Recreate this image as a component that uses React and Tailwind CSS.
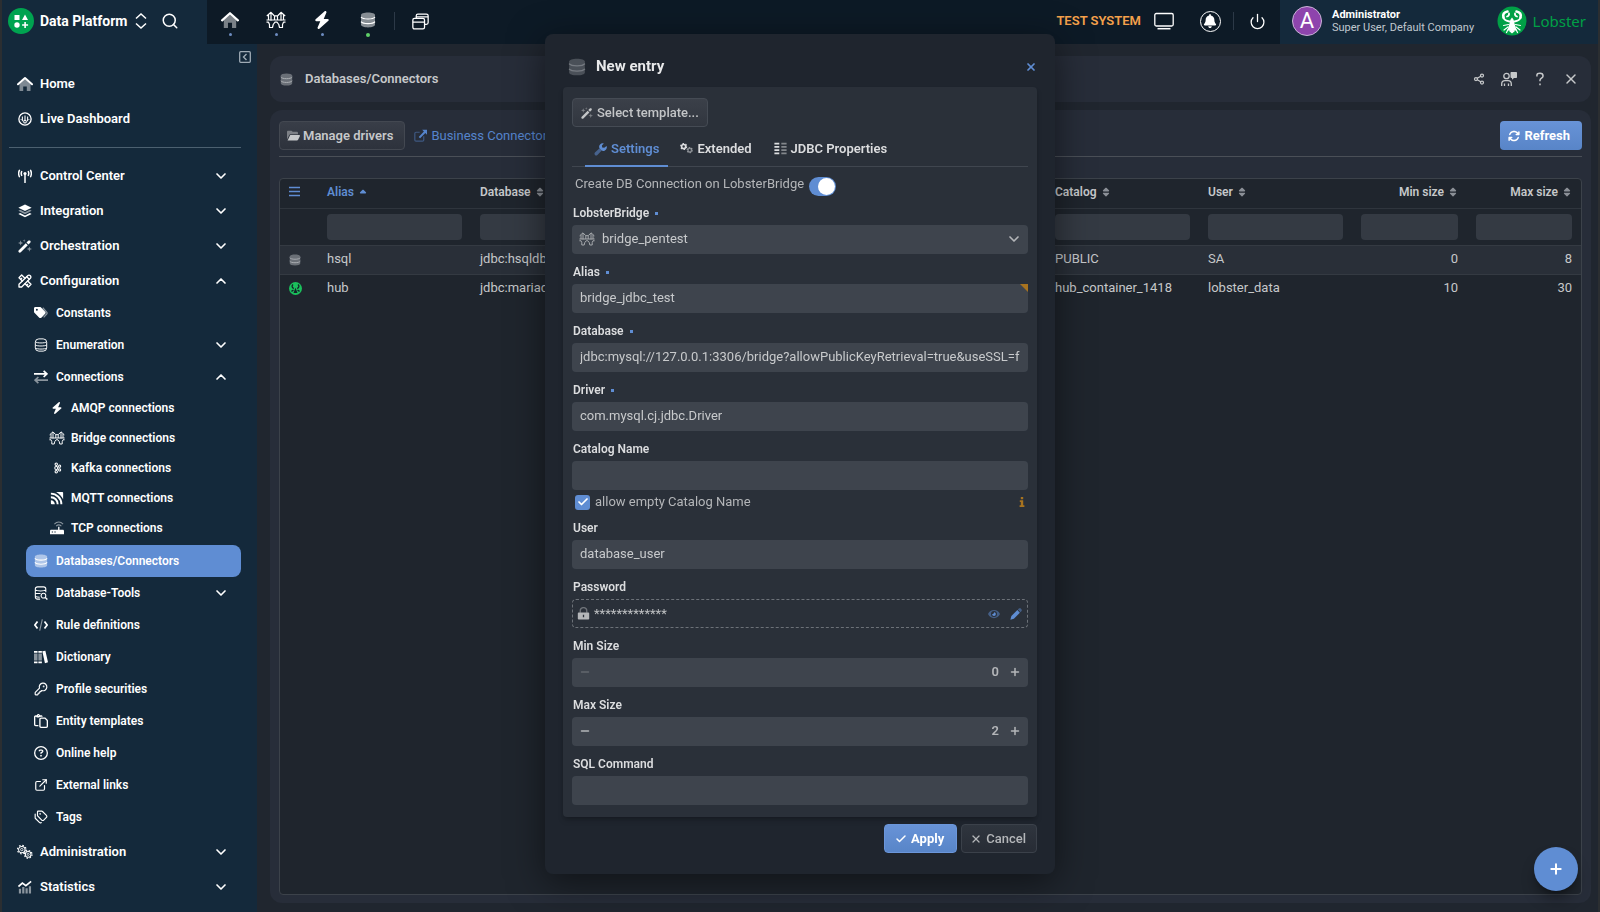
import { useState } from 'react'
import { Check, ChevronDown, ChevronUp, ExternalLink, KeyRound, Minus, Plus, Power, Search, Share2, Tags, X } from 'lucide-react'
import { FaArrowsRotate, FaBell, FaBolt, FaRegCircleQuestion, FaRegPaste, FaSort, FaSortUp } from 'react-icons/fa6'
import { TbTools } from 'react-icons/tb'

function Svg({ box = 16, className = 'size-4', children }) {
  return (
    <svg viewBox={`0 0 ${box} ${box}`} className={`shrink-0 ${className}`} fill="none" stroke="none" aria-hidden="true">
      {children}
    </svg>
  )
}

function DatabaseIcon({ className }) {
  return (
    <Svg className={className}>
      <path fill="currentColor" fillOpacity=".5" d="M1 3.2C1 1.7 4 .6 8 .6s7 1.100 7 2.600v9.600c0 1.500-3 2.600-7 2.600s-7-1.100-7-2.600z" />
      <path stroke="currentColor" strokeWidth="1.200" d="M1 5c1 1.300 3.500 2 7 2s6-.7 7-2M1 9.600c1 1.300 3.500 2 7 2s6-.7 7-2" />
    </Svg>
  )
}

function DatabaseOutlineIcon({ className }) {
  return (
    <Svg className={className}>
      <g stroke="currentColor" strokeWidth="1.100">
        <rect x="1.500" y="1" width="13" height="14" rx="4" />
        <path d="M1.500 4.500c2 1.500 11 1.500 13 0M1.500 8c2 1.500 11 1.500 13 0M1.500 11.500c2 1.500 11 1.500 13 0" />
      </g>
    </Svg>
  )
}

function DatabaseSearchIcon({ className }) {
  return (
    <Svg className={className}>
      <g stroke="currentColor" strokeWidth="1.200">
        <path d="M7 15H4c-1.500 0-2.500-1-2.500-2.500v-9C1.500 2 2.500 1 4 1h7c1.500 0 2.500 1 2.500 2.500V7M1.500 4.500c2 1.500 10 1.500 12 0M1.500 8.500h6M1.500 12c1.500.6 3 .8 5 .8" />
        <circle cx="10.800" cy="11" r="2.700" />
        <path d="m12.800 13 2.500 2.500" strokeWidth="1.600" />
      </g>
    </Svg>
  )
}

function HomeIcon({ className }) {
  return (
    <Svg className={className}>
      <path fill="currentColor" fillOpacity=".45" d="M2.500 8 8 3l5.500 5v7H9.800v-4.500H6.200V15H2.500z" />
      <path stroke="currentColor" strokeWidth="2" strokeLinecap="round" strokeLinejoin="round" d="M1 8.300 8 2l7 6.300" />
    </Svg>
  )
}

function BridgeIcon({ className }) {
  return (
    <Svg box={20} className={className}>
      <g stroke="currentColor" strokeWidth="1.200" strokeLinejoin="round">
        <path d="M.8 6 5 2.300 8 5.500c1.300.6 2.700.6 4 0l3-3.200L19.200 6M5 2.500v8M15 2.500v8M8.500 6v4M11.500 6v4M2.500 5v5M17.500 5v5" />
        <path d="M.5 10h19M.5 12.200h2l1 2.300v3h3l.7-3L9 12.200h2l1.800 2.300.7 3h3v-3l1-2.300h2" />
      </g>
    </Svg>
  )
}

function GaugeIcon({ className }) {
  return (
    <Svg className={className}>
      <circle cx="8" cy="8" r="7" stroke="currentColor" strokeWidth="1.500" />
      <path stroke="currentColor" strokeWidth="1.200" d="M8 4v6M5 5v5.500M11 5v5.500M3.500 8v.8M12.500 8v.8" />
      <circle cx="8" cy="11" r="1.500" stroke="currentColor" strokeWidth="1.200" />
    </Svg>
  )
}

function TowerIcon({ className }) {
  return (
    <Svg className={className}>
      <path stroke="currentColor" strokeWidth="1.700" strokeLinecap="round" d="M8 7v8.500M1.600 1.500c-1.100 2.200-1.100 5 0 7.300M14.400 1.500c1.100 2.200 1.100 5 0 7.300M4.200 3c-.6 1.200-.6 3 0 4.300M11.800 3c.6 1.200.6 3 0 4.300" />
      <circle cx="8" cy="5.200" r="1.800" fill="currentColor" />
    </Svg>
  )
}

function LayersIcon({ className }) {
  return (
    <Svg className={className}>
      <path fill="currentColor" d="m8 .6 7.600 3.700L8 8 .4 4.300zM.4 11.300l2.100-1L8 13l5.500-2.700 2.100 1L8 15.200z" />
      <path fill="currentColor" fillOpacity=".5" d="m.4 7.700 2.100-1L8 9.400l5.500-2.700 2.100 1L8 11.600z" />
    </Svg>
  )
}

function WandIcon({ className }) {
  return (
    <Svg className={className}>
      <path fill="currentColor" d="m.9 12.900 8-8 2.300 2.300-8 8c-.6.600-1.700.600-2.300 0s-.6-1.700 0-2.300zM9.700 4.100l2-2c.6-.6 1.700-.6 2.300 0s.6 1.700 0 2.300l-2 2z" />
      <path fill="currentColor" fillOpacity=".5" d="m3 1.500.8 2.200L6 4.500l-2.200.8L3 7.500l-.8-2.200L0 4.500l2.200-.8zM7 0l.4 1.600L9 2l-1.600.4L7 4l-.4-1.600L5 2l1.600-.4zM13 8.500l.8 2.200 2.200.8-2.200.8-.8 2.200-.8-2.200-2.200-.8 2.200-.8z" />
    </Svg>
  )
}

function TagIcon({ className }) {
  return (
    <Svg className={className}>
      <path stroke="currentColor" strokeOpacity=".5" strokeWidth="1.500" d="m10 2 4.500 5c.6.700.6 1.500 0 2.200L11 13" />
      <path fill="currentColor" fillRule="evenodd" d="M0 2.500C0 1.700.7 1 1.500 1h5c.5 0 1 .2 1.300.5l5 5c.7.700.7 1.700 0 2.400l-4.400 4.400c-.7.700-1.700.7-2.400 0l-5.500-5.500C.2 7.500 0 7 0 6.500zM3.300 5.300a1.100 1.100 0 1 0 0-2.200 1.100 1.100 0 0 0 0 2.200z" />
    </Svg>
  )
}

function ArrowsIcon({ className }) {
  return (
    <Svg className={className}>
      <path stroke="currentColor" strokeWidth="1.900" d="M0 4.500h14M11 1l3.700 3.500L11 8" />
      <path stroke="currentColor" strokeOpacity=".5" strokeWidth="1.900" d="M16 11.500H2M5 8l-3.700 3.500L5 15" />
    </Svg>
  )
}

function KafkaIcon({ className }) {
  return (
    <Svg className={className}>
      <g stroke="currentColor" strokeWidth="1.400">
        <circle cx="7" cy="3" r="1.600" />
        <circle cx="7" cy="8" r="2" />
        <circle cx="7" cy="13" r="1.600" />
        <circle cx="11.500" cy="5.500" r="1.400" />
        <circle cx="11.500" cy="10.500" r="1.400" />
        <path d="M7 4.500V6M7 10v1.500M8.700 7l1.500-.8M8.700 9l1.500.8" />
      </g>
    </Svg>
  )
}

function MqttIcon({ className }) {
  return (
    <Svg className={className}>
      <path fill="currentColor" d="M1 10.500c2.500 0 4.500 2 4.500 4.500H2a1 1 0 0 1-1-1z" />
      <path stroke="currentColor" strokeWidth="2.200" d="M1 7.200A7.800 7.800 0 0 1 8.800 15M1 3A12 12 0 0 1 13 15" />
      <path fill="currentColor" d="M7 1h7a1 1 0 0 1 1 1v7.500C13.500 6 10.500 3 7 1z" />
    </Svg>
  )
}

function RouterIcon({ className }) {
  return (
    <Svg className={className}>
      <path stroke="currentColor" strokeOpacity=".5" strokeWidth="1.200" d="M5 3.500c3-3 7-3 10 0M7 5.800c2-1.800 4-1.800 6 0" />
      <path fill="currentColor" fillRule="evenodd" d="M9.300 6.500h1.500V10H14.500c.8 0 1.500.6 1.500 1.300V15H0v-3.700C0 10.600.7 10 1.500 10h7.800zM2 12v1.200h1.500V12zm3 0v1.200h1.500V12z" />
    </Svg>
  )
}

function CodeIcon({ className }) {
  return (
    <Svg className={className}>
      <path stroke="currentColor" strokeWidth="2" strokeLinejoin="round" d="M4 4 1 8l3 4M12 4l3 4-3 4" />
      <path stroke="currentColor" strokeOpacity=".5" strokeWidth="1.300" d="M9.500 1.500 6.500 14.500" />
    </Svg>
  )
}

function BooksIcon({ className }) {
  return (
    <Svg className={className}>
      <path fill="currentColor" fillOpacity=".5" d="M0 4h4v8H0zM5 4h4v8H5z" />
      <path fill="currentColor" d="M0 1h4v2H0zM5 1h4v2H5zM0 13h4v2H0zM5 13h4v2H5zM9.500 1.500 13 .8 16 14l-3.500 1z" />
    </Svg>
  )
}

function GearsIcon({ className }) {
  return (
    <Svg box={20} className={className}>
      <g stroke="currentColor">
        <circle cx="6" cy="7" r="4" strokeWidth="1.300" />
        <circle cx="6" cy="7" r="5.300" strokeWidth="1.500" strokeDasharray="2 2.160" />
        <circle cx="6" cy="7" r="1.500" strokeWidth="1" />
        <circle cx="14" cy="13" r="3.500" strokeWidth="1.300" />
        <circle cx="14" cy="13" r="4.800" strokeWidth="1.500" strokeDasharray="1.900 1.870" />
        <circle cx="14" cy="13" r="1.300" strokeWidth="1" />
      </g>
    </Svg>
  )
}

function GearsSolidIcon({ className }) {
  return (
    <Svg className={className}>
      <g stroke="currentColor">
        <circle cx="4.500" cy="5.500" r="2.500" strokeWidth="2" />
        <circle cx="4.500" cy="5.500" r="3.700" strokeWidth="1.400" strokeDasharray="2 1.870" />
        <g strokeOpacity=".5">
          <circle cx="12" cy="10" r="2.200" strokeWidth="1.800" />
          <circle cx="12" cy="10" r="3.300" strokeWidth="1.300" strokeDasharray="1.800 1.650" />
        </g>
      </g>
    </Svg>
  )
}

function StatsIcon({ className }) {
  return (
    <Svg className={className}>
      <path fill="currentColor" fillOpacity=".5" d="M1 10h2.500v5.500H1zM4.800 8h2.500v7.500H4.800zM8.600 9.500h2.500v6H8.600zM12.400 7h2.500v8.500h-2.500z" />
      <path stroke="currentColor" strokeWidth="1.900" d="m.5 7.500 4.500-4L9 6.500 15 1.500" />
    </Svg>
  )
}

function WindowsIcon({ className }) {
  return (
    <Svg className={className}>
      <g stroke="currentColor" strokeWidth="1.200">
        <rect x=".8" y="5" width="11" height="10" rx="1.500" />
        <path d="M.8 8.500h11M4 5V2.500C4 1.700 4.700 1 5.500 1h8c1 0 1.700.7 1.700 1.500V9c0 1-.7 1.700-1.700 1.700h-1.600M4 3.600h11" />
      </g>
    </Svg>
  )
}

function FolderIcon({ className }) {
  return (
    <Svg className={className}>
      <path fill="currentColor" fillOpacity=".5" d="M0 13V3.500C0 2.700.6 2 1.500 2h4L7 3.500h5c.8 0 1.500.7 1.500 1.500v1.500H4.500C3.500 6.500 3 7 2.500 8z" />
      <path fill="currentColor" d="M4 7.500h11c.8 0 1.200.6.9 1.200l-2.300 4.500c-.3.500-.8.8-1.300.8H.7z" />
    </Svg>
  )
}

function LinkOutIcon({ className }) {
  return (
    <Svg className={className}>
      <path stroke="currentColor" strokeOpacity=".5" strokeWidth="1.500" d="M7 4H2.500C1.700 4 1 4.700 1 5.500v8c0 .8.7 1.500 1.500 1.500h8c.8 0 1.500-.7 1.500-1.500V9" />
      <path fill="currentColor" d="M10 1h6v6l-2-2-6.500 6.500-1.700-1.700L12.200 3z" />
    </Svg>
  )
}

function WrenchIcon({ className }) {
  return (
    <Svg className={className}>
      <path fill="currentColor" fillOpacity=".55" d="M6.800 6.500 9.500 9.200 4.200 14.700c-.9.900-2.200.9-3 0s-.8-2.100 0-3z" />
      <path fill="currentColor" d="M15.500 3.600c.9 2.400-.2 5-2.500 5.900-1.300.5-2.500.4-3.500-.3L6.800 6.500C6 5 6.200 3 7.500 1.700 8.700.5 10.500.1 12 .6L9.700 3l.4 2.400 2.500.500z" />
    </Svg>
  )
}

function ListIcon({ className }) {
  return (
    <Svg className={className}>
      <path stroke="currentColor" strokeWidth="1.900" d="M.5 2h6M.5 6h6M.5 10h6M.5 14h6" />
      <path stroke="currentColor" strokeOpacity=".5" strokeWidth="1.900" d="M9 2h6.500M9 6h6.500M9 10h6.500M9 14h6.500" />
    </Svg>
  )
}

function LockIcon({ className }) {
  return (
    <Svg className={className}>
      <path stroke="currentColor" strokeOpacity=".5" strokeWidth="1.700" d="M4 7V4.800a4 4 0 0 1 8 0V7" />
      <path fill="currentColor" fillRule="evenodd" d="M2 6.800h12c.6 0 1 .4 1 1V14.500c0 .6-.4 1-1 1H2c-.6 0-1-.4-1-1V7.800c0-.6.4-1 1-1zM7.200 9.500v3h1.600v-3z" />
    </Svg>
  )
}

function EyeIcon({ className }) {
  return (
    <Svg className={className}>
      <path fill="currentColor" fillOpacity=".5" fillRule="evenodd" d="M0 8c1.500-3.500 4.500-5.500 8-5.500S14.500 4.500 16 8c-1.500 3.500-4.500 5.500-8 5.500S1.500 11.500 0 8zM8 12a4 4 0 1 0 0-8 4 4 0 0 0 0 8z" />
      <path fill="currentColor" d="M8 5.500A2.500 2.500 0 1 1 5.500 8C7 8.200 8.200 7 8 5.500z" />
    </Svg>
  )
}

function PenIcon({ className }) {
  return (
    <Svg className={className}>
      <path fill="currentColor" d="m9.800 2.800 3.400 3.400-8 8L.5 15.500l1.300-4.700z" />
      <path fill="currentColor" fillOpacity=".5" d="m10.500 2.100 1.300-1.300c.8-.8 1.900-.8 2.600 0l.8.800c.8.700.8 1.800 0 2.600l-1.300 1.300z" />
    </Svg>
  )
}

function SupportIcon({ className }) {
  return (
    <Svg className={className}>
      <g stroke="currentColor" strokeWidth="1.300">
        <circle cx="5.500" cy="5" r="2.700" />
        <path d="M.7 15v-2c0-2 1.500-3.300 3.300-3.300h3c1.800 0 3.300 1.300 3.300 3.300v2M3.500 15v-2.500M7.500 15v-2.500" />
      </g>
      <path fill="currentColor" d="M10.500 1h4.500c.6 0 1 .4 1 1v4c0 .6-.4 1-1 1h-2l-2 1.800V7c-1 0-1.500-.4-1.500-1V2c0-.6.400-1 1-1z" />
    </Svg>
  )
}

function LobsterIcon({ className }) {
  return (
    <Svg box={30} className={className}>
      <circle cx="15" cy="15" r="14.500" fill="#00a046" />
      <g stroke="#fff" strokeLinecap="round">
        <path strokeWidth="2.600" d="M10.500 5.500C7 6 5.500 8.500 6.500 11.500M19.500 5.500c3.500.5 5 3 4 6" />
        <path strokeWidth="1.800" d="M12 7.500c.3 1.500-.5 2.500-2 3M18 7.500c-.3 1.500.5 2.500 2 3M6.500 11.500c.5 2 2.500 3.500 6 4M23.500 11.500c-.5 2-2.500 3.500-6 4" />
        <path strokeWidth="1.200" d="m11.500 18.500-5 1M18.500 18.500l5 1M11 21l-4 3M19 21l4 3M11 23.500l-1.500 3M19 23.500l1.500 3" />
      </g>
      <path fill="#fff" d="M15 11.500c1.500 1.500 2 3 2.200 5l2.300 7.500c-2 1.500-7 1.500-9 0l2.300-7.500c.2-2 .7-3.500 2.200-5zM12 25h6l-3 2.500z" />
    </Svg>
  )
}

const mainNav = [
  { label: 'Control Center', Icon: TowerIcon },
  { label: 'Integration', Icon: LayersIcon },
  { label: 'Orchestration', Icon: WandIcon },
]

const configNav = [
  { label: 'Constants', Icon: TagIcon },
  { label: 'Enumeration', Icon: DatabaseOutlineIcon, chevron: 'down' },
  {
    label: 'Connections',
    Icon: ArrowsIcon,
    chevron: 'up',
    children: [
      { label: 'AMQP connections', Icon: FaBolt, size: 'size-3' },
      { label: 'Bridge connections', Icon: BridgeIcon, size: 'size-4' },
      { label: 'Kafka connections', Icon: KafkaIcon, size: 'size-3' },
      { label: 'MQTT connections', Icon: MqttIcon, size: 'size-3.5' },
      { label: 'TCP connections', Icon: RouterIcon, size: 'size-3.5' },
    ],
  },
  { label: 'Databases/Connectors', Icon: DatabaseIcon, active: true },
  { label: 'Database-Tools', Icon: DatabaseSearchIcon, chevron: 'down' },
  { label: 'Rule definitions', Icon: CodeIcon },
  { label: 'Dictionary', Icon: BooksIcon },
  { label: 'Profile securities', Icon: KeyRound },
  { label: 'Entity templates', Icon: FaRegPaste },
  { label: 'Online help', Icon: FaRegCircleQuestion },
  { label: 'External links', Icon: ExternalLink },
  { label: 'Tags', Icon: Tags },
]

const rows = [
  { alias: 'hsql', database: 'jdbc:hsqldb', catalog: 'PUBLIC', user: 'SA', min: 0, max: 8 },
  { alias: 'hub', database: 'jdbc:mariadb', catalog: 'hub_container_1418', user: 'lobster_data', min: 10, max: 30, own: true },
]

function Chevron({ dir }) {
  if (!dir) return null
  const Icon = dir === 'up' ? ChevronUp : ChevronDown
  return <Icon className="ml-auto size-4 shrink-0" strokeWidth={2.5} />
}

function NavItem({ label, Icon, chevron, size = 'size-3.5' }) {
  return (
    <a href="#" className="flex h-8 items-center gap-[7px] pr-3 pl-2">
      <span className="flex w-4 justify-center"><Icon className={size} /></span>
      <span>{label}</span>
      <Chevron dir={chevron} />
    </a>
  )
}

function SubNavItem({ item }) {
  const { label, Icon, chevron, active, children } = item
  return (
    <li>
      <a href="#" className={`ml-[17px] flex h-8 items-center gap-2 rounded-lg pr-3 pl-2 text-[12px] font-semibold ${active ? 'bg-[#5f8dd3]' : ''}`}>
        <Icon className="size-3.5" />
        <span>{label}</span>
        <Chevron dir={chevron} />
      </a>
      {children && (
        <ul className="pb-0.5 text-[12px]">
          {children.map((child) => (
            <li key={child.label}>
              <a href="#" className="ml-10 flex h-[30px] items-center gap-1.5">
                <span className="flex w-4 justify-center"><child.Icon className={child.size} /></span>
                {child.label}
              </a>
            </li>
          ))}
        </ul>
      )}
    </li>
  )
}

function TopBar() {
  return (
    <header className="flex h-11 shrink-0 bg-[#0d1a26] text-white">
      <div className="flex w-[205px] items-center bg-[#14293b] pb-0.5 pl-1.5">
        <Svg box={26} className="size-[26px]">
          <circle cx="13" cy="13" r="13" fill="#00a350" />
          <path fill="#fff" d="M6.500 7h5v5h-5zM17 6.500l3 5.500h-6zM16.300 14h1.600v2.200h2.200v1.600h-2.200V20h-1.600v-2.200h-2.200v-1.600h2.200z" />
          <circle cx="9" cy="17" r="2.700" fill="#fff" />
        </Svg>
        <span className="ml-1.5 text-[14px] font-bold">Data Platform</span>
        <button className="ml-1.5" aria-label="Switch platform">
          <Svg className="size-4">
            <path stroke="currentColor" strokeWidth="1.500" d="m3 5.500 5-4.500 5 4.500M3 10.500l5 4.500 5-4.500" />
          </Svg>
        </button>
        <button className="ml-3" aria-label="Search"><Search className="size-[18px]" strokeWidth={2} /></button>
      </div>
      <nav className="flex items-center pb-0.5">
        {[HomeIcon, BridgeIcon, FaBolt, DatabaseIcon].map((Icon, i) => (
          <button key={i} aria-label={['Home', 'Bridge', 'Events', 'Databases'][i]} className="flex h-11 w-[46px] flex-col items-center gap-1 pt-3">
            <Icon className={i === 1 ? '-my-px size-5' : i === 0 ? 'size-[18px]' : 'h-[18px] w-4'} />
            <span className={`rounded-full ${i === 3 ? 'size-1 bg-[#5fd068]' : 'size-[3px] bg-[#6d8cc0]'}`} />
          </button>
        ))}
        <span className="ml-[3px] h-[18px] w-px bg-[#2c3947]" />
        <button aria-label="Windows" className="flex w-[50px] justify-center"><WindowsIcon className="size-[17px]" /></button>
      </nav>
      <div className="ml-auto flex items-center pb-0.5">
        <span className="text-[13px] font-semibold text-[#f5a14b]">TEST SYSTEM</span>
        <button aria-label="Display" className="flex w-[46px] justify-center">
          <Svg box={20} className="size-5">
            <rect x=".8" y="2.500" width="18.400" height="12.500" rx="1.500" stroke="currentColor" strokeWidth="1.300" />
            <path stroke="currentColor" strokeWidth="1.500" d="M3.500 17.700h13" />
          </Svg>
        </button>
        <button aria-label="Notifications" className="flex w-[46px] justify-center">
          <span className="flex size-[21px] items-center justify-center rounded-full border border-white"><FaBell className="size-3.5" /></span>
        </button>
        <span className="h-[18px] w-px bg-[#2c3947]" />
        <button aria-label="Log out" className="flex w-[46px] justify-center"><Power className="size-[17px]" strokeWidth={1.8} /></button>
      </div>
      <div className="flex w-[318px] items-center bg-[#14293b] pr-3 pb-0.5 pl-3">
        <span className="flex size-[30px] items-center justify-center rounded-full border border-[#c9b3d6] bg-[#8e44ad] text-[22px] leading-none">A</span>
        <div className="ml-2.5 text-[11px] leading-[13px]">
          <div className="font-bold">Administrator</div>
          <div className="text-[#c0c8cf]">Super User, Default Company</div>
        </div>
        <div className="ml-auto flex items-center gap-1.5">
          <LobsterIcon className="size-[30px]" />
          <span className="font-['Noto_Sans',sans-serif] text-[15px] text-[#00a046]">Lobster</span>
        </div>
      </div>
    </header>
  )
}

function Sidebar() {
  return (
    <aside className="w-[255px] shrink-0 bg-[#14293b] pt-[7px] pr-4 pl-[7px] text-[13px] font-semibold text-white">
      <button className="-mr-2.5 ml-auto block text-[#9fabb5]" aria-label="Collapse menu">
        <Svg box={12} className="size-3">
          <rect x=".7" y=".7" width="10.600" height="10.600" rx="1" stroke="currentColor" strokeWidth="1.300" />
          <path stroke="currentColor" strokeWidth="1.400" d="M7.500 3 4.500 6l3 3" />
        </Svg>
      </button>
      <div className="mt-[5px] flex flex-col gap-[3px]">
        <NavItem label="Home" Icon={HomeIcon} size="size-4" />
        <NavItem label="Live Dashboard" Icon={GaugeIcon} />
      </div>
      <hr className="my-3 border-[#4c6070]" />
      <div className="flex flex-col gap-[3px]">
        {mainNav.map((item) => (
          <NavItem key={item.label} {...item} chevron="down" />
        ))}
        <div>
          <NavItem label="Configuration" Icon={TbTools} size="size-4" chevron="up" />
          <ul>
            {configNav.map((item) => (
              <SubNavItem key={item.label} item={item} />
            ))}
          </ul>
        </div>
        <NavItem label="Administration" Icon={GearsIcon} size="size-4" chevron="down" />
        <NavItem label="Statistics" Icon={StatsIcon} chevron="down" />
      </div>
    </aside>
  )
}

function HeadCell({ children, right }) {
  return (
    <th className={`h-[29px] px-[9px] pb-0.5 font-semibold ${right ? 'text-right' : 'text-left'}`}>
      <span className="inline-flex items-center gap-1">{children}<FaSort className="size-2.5 text-[#8b9097]" /></span>
    </th>
  )
}

function DataTable() {
  return (
    <div className="mt-[21px] flex-1 rounded-sm border border-[#3c424a] bg-[#1f252d]">
      <table className="w-full table-fixed border-collapse text-[13px] text-[#c6c8ca]">
        <colgroup>
          <col className="w-[38px]" />
          <col className="w-[153px]" />
          <col />
          <col className="w-[153px]" />
          <col className="w-[153px]" />
          <col className="w-[115px]" />
          <col className="w-[114px]" />
        </colgroup>
        <thead className="text-[12px]">
          <tr className="border-b border-[#2f353d]">
            <th className="pb-1 pl-[9px] text-left text-[#5f8dd3]">
              <Svg box={11} className="size-[11px]">
                <path stroke="currentColor" strokeWidth="1.400" d="M0 1.500h11M0 5.500h11M0 9.500h11" />
              </Svg>
            </th>
            <th className="px-[9px] pb-0.5 text-left font-semibold text-[#5f8dd3]">
              <span className="inline-flex items-center gap-1">Alias<FaSortUp className="mt-1 size-2.5" /></span>
            </th>
            <HeadCell>Database</HeadCell>
            <HeadCell>Catalog</HeadCell>
            <HeadCell>User</HeadCell>
            <HeadCell right>Min size</HeadCell>
            <HeadCell right>Max size</HeadCell>
          </tr>
          <tr className="h-[37px] border-b border-[#343a42]">
            <td />
            {['Alias', 'Database', 'Catalog', 'User', 'Min size', 'Max size'].map((name) => (
              <td key={name} className="px-[9px]">
                <input aria-label={`Filter ${name}`} className="block h-[26px] w-full rounded-sm bg-[#343a43] px-2" />
              </td>
            ))}
          </tr>
        </thead>
        <tbody>
          {rows.map((row) => (
            <tr key={row.alias} className="h-[29px] odd:border-b odd:border-[#343a42] odd:bg-[#292f38]">
              <td className="pl-[9px]">
                {row.own ? (
                  <Svg className="size-[13px]">
                    <circle cx="8" cy="8" r="8" fill="#1bc05c" />
                    <path stroke="#15202a" strokeWidth="1.600" d="M5 3C3 4.500 3.500 7 6 8M11 3c2 1.500 1.500 4-1 5M3 11.500 5.500 10M13 11.500 10.500 10" />
                    <path fill="#15202a" d="m8 7 2.500 6.500h-5z" />
                  </Svg>
                ) : (
                  <DatabaseIcon className="size-3 text-[#aeb1b5]" />
                )}
              </td>
              <td className="px-[9px] pb-0.5">{row.alias}</td>
              <td className="px-[9px] pb-0.5">{row.database}</td>
              <td className="px-[9px] pb-0.5">{row.catalog}</td>
              <td className="px-[9px] pb-0.5">{row.user}</td>
              <td className="px-[9px] pb-0.5 text-right">{row.min}</td>
              <td className="px-[9px] pb-0.5 text-right">{row.max}</td>
            </tr>
          ))}
        </tbody>
      </table>
    </div>
  )
}

function Main() {
  return (
    <main className="flex flex-1 flex-col gap-2 bg-[#20262f] pt-3 pr-[7px] pb-[9px] pl-[13px] text-[#c6c8ca]">
      <div className="flex h-[46px] items-center rounded-xl bg-[#272d39] pr-3 pl-2.5">
        <DatabaseIcon className="size-[13px] text-[#aeb1b5]" />
        <h1 className="ml-3 text-[13px] font-semibold">Databases/Connectors</h1>
        <div className="ml-auto flex items-center gap-4">
          <button aria-label="Share"><Share2 className="size-3" strokeWidth={2.5} /></button>
          <button aria-label="Support"><SupportIcon className="size-4" /></button>
          <button aria-label="Help">
            <Svg className="size-3.5">
              <path stroke="currentColor" strokeWidth="1.700" d="M4.500 5V3.500C4.500 2.500 6 1.500 8 1.500s3.500 1.200 3.500 3c0 2.500-3.500 2.500-3.500 5v1M8 13v2" />
            </Svg>
          </button>
          <button aria-label="Close"><X className="size-4" strokeWidth={2.2} /></button>
        </div>
      </div>
      <section className="flex flex-1 flex-col rounded-xl bg-[#272d39] px-[9px] pt-[11px] pb-2">
        <div className="flex items-start justify-between border-b border-[#4a4f57] pb-1.5">
          <div className="flex items-center gap-[9px]">
            <button className="flex h-[29px] items-center gap-[3px] rounded-sm border border-[#434851] bg-linear-to-b from-[#393e48] to-[#2d323c] px-[7px] pr-[11px] text-[13px] font-semibold">
              <FolderIcon className="size-[13px]" />
              Manage drivers
            </button>
            <a href="#" className="flex items-center gap-1 text-[13px] text-[#5584cc]">
              <LinkOutIcon className="size-[13px]" />
              Business Connectors
            </a>
          </div>
          <button className="flex h-[29px] items-center gap-1 rounded-sm bg-linear-to-b from-[#6893d7] to-[#5885c8] px-2 pr-3 text-[13px] font-bold text-white">
            <FaArrowsRotate className="size-3" />
            Refresh
          </button>
        </div>
        <DataTable />
      </section>
      <button aria-label="New entry" className="fixed right-[22px] bottom-[21px] flex size-11 items-center justify-center rounded-full bg-[#5f8dd3] text-white shadow-lg shadow-black/40">
        <Plus className="size-4" strokeWidth={3} />
      </button>
    </main>
  )
}

const inputClass = 'block h-[29px] w-full rounded-sm bg-[#3e444d] px-2 pb-0.5 text-[13px] text-[#c8cacc] outline-none'

function Field({ id, label, required, children }) {
  return (
    <div>
      <label htmlFor={id} className="mb-[3px] flex h-[18px] items-center gap-1.5 pl-px text-[12px] font-semibold text-[#dcdddf]">
        {label}
        {required && <span className="size-[3px] bg-[#5f8dd3]" />}
      </label>
      {children}
    </div>
  )
}

function NumberField({ id, label, value, onChange }) {
  return (
    <Field id={id} label={label}>
      <div className="flex h-[29px] items-center rounded-sm bg-[#3e444d] px-[7px] pb-0.5 text-[#b4b6b9]">
        <button type="button" aria-label={`Decrease ${label}`} disabled={value === 0} onClick={() => onChange(value - 1)} className="disabled:opacity-30">
          <Minus className="size-3" strokeWidth={3} />
        </button>
        <input id={id} value={value} onChange={(event) => onChange(Number(event.target.value) || 0)} className="min-w-0 flex-1 pr-2.5 text-right text-[13px] font-semibold outline-none" />
        <button type="button" aria-label={`Increase ${label}`} onClick={() => onChange(value + 1)}>
          <Plus className="size-3" strokeWidth={3} />
        </button>
      </div>
    </Field>
  )
}

function EntryDialog() {
  const [form, setForm] = useState({
    bridge: 'bridge_pentest',
    alias: 'bridge_jdbc_test',
    database: 'jdbc:mysql://127.0.0.1:3306/bridge?allowPublicKeyRetrieval=true&useSSL=false',
    driver: 'com.mysql.cj.jdbc.Driver',
    catalog: '',
    user: 'database_user',
    min: 0,
    max: 2,
    sql: '',
  })

  function bind(name) {
    return { id: name, value: form[name], onChange: (event) => setForm({ ...form, [name]: event.target.value }) }
  }

  return (
    <div className="fixed inset-0 flex items-start justify-center pt-[34px]">
      <div role="dialog" aria-labelledby="dialog-title" className="w-[510px] rounded-lg bg-[#1f252e] px-[18px] pb-[21px] shadow-[0_8px_36px_rgba(0,0,0,0.5)]">
        <div className="flex h-[53px] items-center pt-3 pl-[5px]">
          <DatabaseIcon className="size-[18px] text-[#767b82]" />
          <h2 id="dialog-title" className="ml-2.5 text-[15px] font-bold text-[#e8e9ea]">New entry</h2>
          <button aria-label="Close dialog" className="ml-auto text-[#5f8dd3]"><X className="size-3" strokeWidth={3.5} /></button>
        </div>

        <div className="rounded-sm bg-[#2a3039] px-[9px] pt-[11px] pb-3 shadow-md shadow-black/20">
          <button className="flex h-[29px] items-center gap-1 rounded-sm border border-[#454b54] bg-linear-to-b from-[#3b4049] to-[#31363f] px-2 text-[13px] font-medium text-[#c3c5c7]">
            <WandIcon className="size-3" />
            Select template...
          </button>

          <div role="tablist" className="flex h-10 border-b border-[#40464f] pl-[13px] text-[13px] font-semibold text-[#dcdddf]">
            <button role="tab" aria-selected="true" className="flex h-10 items-center gap-1 border-b-2 border-[#5f8dd3] px-[9px] pt-1.5 text-[#5f8dd3]">
              <WrenchIcon className="size-[13px]" />
              Settings
            </button>
            <button role="tab" className="flex items-center gap-1 px-3 pt-1"><GearsSolidIcon className="size-[13px]" />Extended</button>
            <button role="tab" className="flex items-center gap-1 px-2.5 pt-1"><ListIcon className="size-[13px]" />JDBC Properties</button>
          </div>

          <div className="flex h-[37px] items-center gap-[5px] pl-[3px]">
            <label htmlFor="on-bridge" className="pb-1 text-[13px] text-[#b4b6b9]">Create DB Connection on LobsterBridge</label>
            <input id="on-bridge" type="checkbox" role="switch" defaultChecked className="mt-0.5 flex h-[19px] w-[27px] appearance-none items-center rounded-full bg-[#4b5159] p-px before:size-[17px] before:rounded-full before:bg-white checked:justify-end checked:bg-[#5f8dd3]" />
          </div>

          <div className="flex flex-col gap-[9px]">
            <Field id="bridge" label="LobsterBridge" required>
              <div className="relative">
                <select {...bind('bridge')} className={`${inputClass} appearance-none pl-[30px]`}>
                  <option>bridge_pentest</option>
                </select>
                <BridgeIcon className="pointer-events-none absolute top-1.5 left-[7px] size-4 text-[#a9acb0]" />
                <ChevronDown className="pointer-events-none absolute top-1.5 right-1.5 size-4 text-[#b4b6b9]" strokeWidth={2.5} />
              </div>
            </Field>
            <Field id="alias" label="Alias" required>
              <div className="relative">
                <input {...bind('alias')} className={inputClass} />
                <Svg box={8} className="absolute top-0 right-0 size-2"><path fill="#a8731f" d="M0 0h8v8z" /></Svg>
              </div>
            </Field>
            <Field id="database" label="Database" required>
              <input {...bind('database')} className={inputClass} />
            </Field>
            <Field id="driver" label="Driver" required>
              <input {...bind('driver')} className={inputClass} />
            </Field>
            <Field id="catalog" label="Catalog Name">
              <input {...bind('catalog')} className={inputClass} />
            </Field>
          </div>

          <div className="flex h-[29px] items-center pr-px pb-[5px] pl-[3px]">
            <span className="grid size-[15px] place-items-center">
              <input id="empty-catalog" type="checkbox" defaultChecked className="peer col-start-1 row-start-1 size-[15px] appearance-none rounded-[3px] bg-[#3e444d] checked:bg-[#5f8dd3]" />
              <Check className="pointer-events-none invisible col-start-1 row-start-1 size-3 text-white peer-checked:visible" strokeWidth={3.5} />
            </span>
            <label htmlFor="empty-catalog" className="ml-[5px] text-[13px] text-[#b4b6b9]">allow empty Catalog Name</label>
            <Svg box={10} className="ml-auto size-2.5">
              <path fill="#a8731f" d="M3.800 0h2.400v2.200H3.800zM2.800 3.300h3.400v5h1.200V10H2.600V8.300h1.200V5H2.800z" />
            </Svg>
          </div>

          <div className="flex flex-col gap-[9px]">
            <Field id="user" label="User">
              <input {...bind('user')} className={inputClass} />
            </Field>
            <Field id="password" label="Password">
              <div className="flex h-[29px] items-center rounded-sm border border-dashed border-[#6c7178] px-1 pr-[5px]">
                <LockIcon className="size-[13px] text-[#b4b6b9]" />
                <input id="password" readOnly value="*************" className="min-w-0 flex-1 px-1 text-[13px] text-[#bfc1c3] outline-none" />
                <div className="flex items-center gap-2.5 text-[#5f8dd3]">
                  <button type="button" aria-label="Show password"><EyeIcon className="size-3" /></button>
                  <button type="button" aria-label="Edit password"><PenIcon className="size-3" /></button>
                </div>
              </div>
            </Field>
            <NumberField id="min" label="Min Size" value={form.min} onChange={(min) => setForm({ ...form, min })} />
            <NumberField id="max" label="Max Size" value={form.max} onChange={(max) => setForm({ ...form, max })} />
            <Field id="sql" label="SQL Command">
              <input {...bind('sql')} className={inputClass} />
            </Field>
          </div>
        </div>

        <div className="mt-[7px] flex justify-end gap-1">
          <button className="flex h-[29px] items-center gap-1 rounded-sm border border-[#6b96da] bg-linear-to-b from-[#6893d7] to-[#5885c8] px-2.5 pr-3 text-[13px] font-bold text-white">
            <Check className="size-3" strokeWidth={3} />
            Apply
          </button>
          <button className="flex h-[29px] items-center gap-1 rounded-sm border border-[#3b414a] bg-linear-to-b from-[#2f353e] to-[#272c35] px-2 pr-2.5 text-[13px] font-medium text-[#b4b6b9]">
            <X className="size-3" strokeWidth={2.5} />
            Cancel
          </button>
        </div>
      </div>
    </div>
  )
}

export default function App() {
  return (
    <div className="flex min-h-screen flex-col bg-[#2b2e31] px-0.5 font-[Roboto,sans-serif]">
      <TopBar />
      <div className="flex flex-1">
        <Sidebar />
        <Main />
      </div>
      <EntryDialog />
    </div>
  )
}
